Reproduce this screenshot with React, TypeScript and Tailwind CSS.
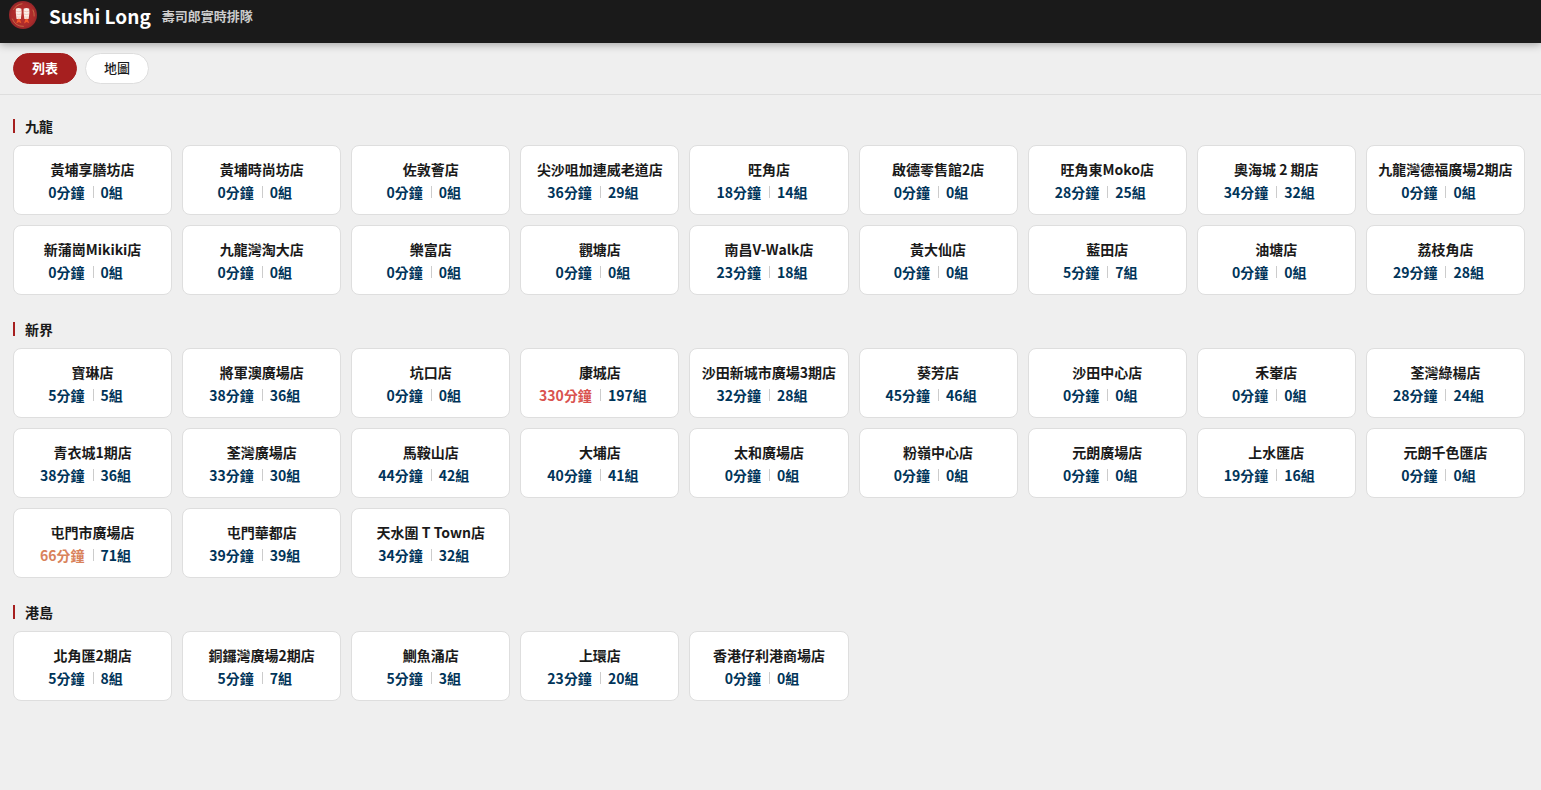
import React, { useState } from 'react';

type Store = [name: string, minutes: number, groups: number];

interface Region {
  name: string;
  stores: Store[];
}

const regions: Region[] = [
  {
    name: '九龍',
    stores: [
      ['黃埔享膳坊店', 0, 0],
      ['黃埔時尚坊店', 0, 0],
      ['佐敦薈店', 0, 0],
      ['尖沙咀加連威老道店', 36, 29],
      ['旺角店', 18, 14],
      ['啟德零售館2店', 0, 0],
      ['旺角東Moko店', 28, 25],
      ['奧海城 2 期店', 34, 32],
      ['九龍灣德福廣場2期店', 0, 0],
      ['新蒲崗Mikiki店', 0, 0],
      ['九龍灣淘大店', 0, 0],
      ['樂富店', 0, 0],
      ['觀塘店', 0, 0],
      ['南昌V-Walk店', 23, 18],
      ['黃大仙店', 0, 0],
      ['藍田店', 5, 7],
      ['油塘店', 0, 0],
      ['荔枝角店', 29, 28],
    ],
  },
  {
    name: '新界',
    stores: [
      ['寶琳店', 5, 5],
      ['將軍澳廣場店', 38, 36],
      ['坑口店', 0, 0],
      ['康城店', 330, 197],
      ['沙田新城市廣場3期店', 32, 28],
      ['葵芳店', 45, 46],
      ['沙田中心店', 0, 0],
      ['禾輋店', 0, 0],
      ['荃灣綠楊店', 28, 24],
      ['青衣城1期店', 38, 36],
      ['荃灣廣場店', 33, 30],
      ['馬鞍山店', 44, 42],
      ['大埔店', 40, 41],
      ['太和廣場店', 0, 0],
      ['粉嶺中心店', 0, 0],
      ['元朗廣場店', 0, 0],
      ['上水匯店', 19, 16],
      ['元朗千色匯店', 0, 0],
      ['屯門市廣場店', 66, 71],
      ['屯門華都店', 39, 39],
      ['天水圍 T Town店', 34, 32],
    ],
  },
  {
    name: '港島',
    stores: [
      ['北角匯2期店', 5, 8],
      ['銅鑼灣廣場2期店', 5, 7],
      ['鰂魚涌店', 5, 3],
      ['上環店', 23, 20],
      ['香港仔利港商場店', 0, 0],
    ],
  },
];

const waitColor = (minutes: number) => {
  if (minutes >= 120) return 'text-[#d9534f]';
  if (minutes >= 60) return 'text-[#d9825b]';
  return 'text-[#003459]';
};

const Logo: React.FC = () => (
  <svg className="size-7 shrink-0" viewBox="0 0 28 28" aria-hidden="true">
    <defs>
      <radialGradient id="plate">
        <stop offset="0" stopColor="#b9302e" />
        <stop offset="0.8" stopColor="#ab2b2a" />
        <stop offset="1" stopColor="#94262a" />
      </radialGradient>
    </defs>
    <circle cx="14" cy="14" r="14" fill="url(#plate)" />
    <path d="M4.5 8.5A11.5 11.5 0 0 1 13 2.8M24 9a11.5 11.5 0 0 1 1.2 6M3.4 18a11.5 11.5 0 0 0 11 7.4" fill="none" stroke="#c9784a" strokeWidth="0.8" strokeLinecap="round" />
    {[6.8, 14.6].map((x) => (
      <g key={x} transform={`translate(${x} 6.8)`}>
        <path d="M0 1Q2.8-.4 5.6 1L5.8 5 5 11.2H.8L0 5Z" fill="#fbeee8" />
        <path d="M.3 3.4q2.5 1 5.2 0M.4 6.2q2.4 1 5 0M.9 9q2 .8 4 0" fill="none" stroke="#efb8a8" strokeWidth="0.7" />
        <path d="M2 11h2l1.6 4.4L3 14.2.4 15.6Z" fill="#f0592a" />
      </g>
    ))}
  </svg>
);

const StoreCard: React.FC<{ store: Store }> = ({ store: [name, minutes, groups] }) => (
  <li className="h-[70px] rounded-lg border border-[#dedede] bg-white pt-[11px] text-center text-sm font-semibold">
    <h3 className="leading-6 whitespace-nowrap">{name}</h3>
    <div className="grid grid-cols-2 leading-[22px] text-[#003459]">
      <span className={`pr-2 text-right ${waitColor(minutes)}`}>{minutes}分鐘</span>
      <span className="flex items-center gap-[7px]">
        <span className="h-3 w-px bg-[#cccccc]" />
        {groups}組
      </span>
    </div>
  </li>
);

const tabs = ['列表', '地圖'];

const App: React.FC = () => {
  const [active, setActive] = useState('列表');

  return (
    <div className="min-h-screen bg-[#efefef] text-[#1a1a1a] font-['Noto_Sans_CJK_TC',sans-serif]">
      <header className="relative flex h-[43px] items-start bg-[#1a1a1a] pt-px pl-[9px] shadow-[0_2px_8px_rgba(0,0,0,0.3)]">
        <Logo />
        <h1 className="ml-3 text-[19px] leading-[30px] font-bold text-white">Sushi Long</h1>
        <p className="ml-[11px] text-[13px] leading-[30px] font-semibold text-[#cccccc]">壽司郎實時排隊</p>
      </header>

      <nav className="flex gap-2 border-b border-[#dedede] pt-[10px] pb-[10px] pl-[13px]">
        {tabs.map((tab) => (
          <button
            key={tab}
            type="button"
            onClick={() => setActive(tab)}
            className={`h-[31px] w-16 rounded-full border pb-0.5 text-[13px] ${
              tab === active ? 'border-[#a61f1f] bg-[#a61f1f] font-semibold text-white' : 'border-[#dedede] bg-white font-medium'
            }`}
          >
            {tab}
          </button>
        ))}
      </nav>

      <main className="flex flex-col gap-[27px] pt-6 pr-4 pb-8 pl-[13px]">
        {regions.map((region) => (
          <section key={region.name}>
            <h2 className="mb-3 border-l-2 border-[#a61f1f] pl-[10px] text-sm leading-[14px] font-semibold">{region.name}</h2>
            <ul className="grid grid-cols-[repeat(auto-fill,minmax(150px,1fr))] gap-[10px]">
              {region.stores.map((store) => (
                <StoreCard key={store[0]} store={store} />
              ))}
            </ul>
          </section>
        ))}
      </main>
    </div>
  );
};

export default App;
